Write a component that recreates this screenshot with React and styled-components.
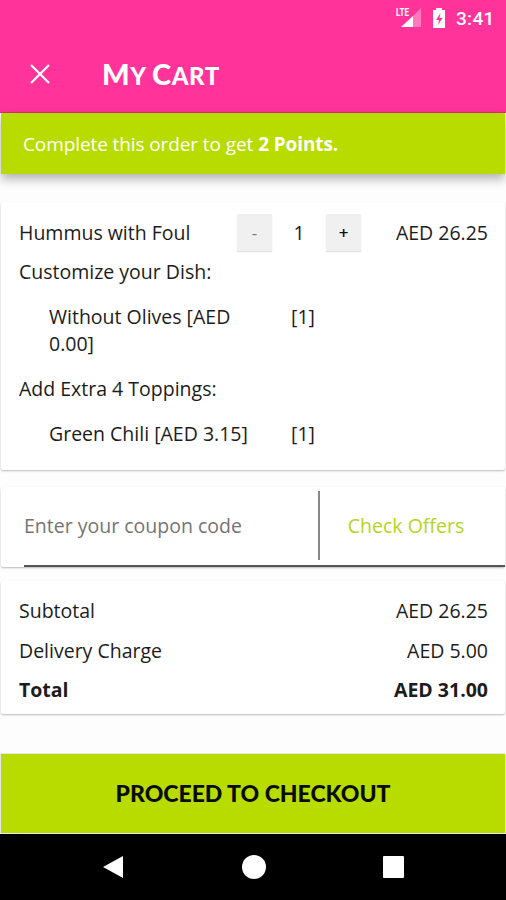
import styled, { createGlobalStyle } from "styled-components";

const GlobalStyle = createGlobalStyle`
  * {
    box-sizing: border-box;
  }
  body {
    margin: 0;
    background-color: #fdfdfd;
    color: #1c1c1c;
    font-family: "Open Sans", "Noto Sans", sans-serif;
    font-size: 19.5px;
    line-height: 27px;
  }
  button, input {
    font: inherit;
    color: inherit;
    border: none;
    background: none;
    padding: 0;
  }
`;
const StyledScreen = styled.div`
  display: flex;
  flex-direction: column;
  width: 506px;
  height: 900px;
  overflow: hidden;
`;
const StyledHeader = styled.header`
  height: 113px;
  background-color: #ff3399;
  border-bottom: 1px solid #d42f80;
  color: white;
`;
const StyledStatusBar = styled.div`
  display: flex;
  justify-content: flex-end;
  align-items: center;
  height: 36px;
  padding-right: 11px;
`;
const StyledClock = styled.span`
  width: 39px;
  margin-left: 9px;
  font-family: Roboto, sans-serif;
  font-size: 19px;
  font-weight: 500;
  letter-spacing: 0.3px;
  white-space: nowrap;
`;
const StyledToolbar = styled.div`
  display: flex;
  align-items: center;
  gap: 52px;
  height: 76px;
  padding-left: 30px;
`;
const StyledIconButton = styled.button`
  display: flex;
`;
const StyledTitle = styled.h1`
  margin: 0;
  font-family: Lato, sans-serif;
  font-size: 24px;
  font-weight: 900;
  letter-spacing: 0.6px;
  text-transform: uppercase;
`;
const StyledCapital = styled.span`
  font-size: 29px;
`;
const StyledBanner = styled.div`
  flex: none;
  display: flex;
  align-items: center;
  gap: 5px;
  height: 61px;
  margin: 0 1px;
  padding: 2px 22px 0;
  background-color: #b8dc00;
  box-shadow: 0 5px 10px rgba(0, 0, 0, 0.3);
  color: white;
  font-size: 19px;
  letter-spacing: -0.1px;
`;
const StyledCard = styled.section`
  flex: none;
  height: ${(props) => props.$height}px;
  margin: ${(props) => props.$top}px 1px 0;
  background-color: white;
  border-radius: 2px;
  box-shadow: 0 1px 2px rgba(0, 0, 0, 0.27);
`;
const StyledItemRow = styled.div`
  display: grid;
  grid-template-columns: 218px 124px 1fr;
  align-items: center;
  height: 37px;
  margin: 12px 17px 7px 18px;
`;
const StyledStepper = styled.div`
  display: flex;
  justify-content: space-between;
  align-items: center;
`;
const StyledStepButton = styled.button`
  width: 35px;
  height: 37px;
  background-color: #f0f0f0;
  box-shadow: 0 1px 1px #e2e2e2;
  font-size: 17px;
  font-weight: ${(props) => (props.$muted ? 400 : 600)};
  color: ${(props) => (props.$muted ? "#777" : "#111")};
`;
const StyledAmount = styled.span`
  text-align: right;
  letter-spacing: ${(props) => props.$spacing || 0}px;
`;
const StyledGroupTitle = styled.div`
  padding-left: 18px;
`;
const StyledOption = styled.div`
  display: grid;
  grid-template-columns: 215px auto;
  gap: 27px;
  padding: 18px 0 18px 48px;
`;
const StyledCouponCard = styled(StyledCard)`
  display: flex;
  padding-left: 23px;
`;
const StyledCouponForm = styled.div`
  display: flex;
  width: 100%;
  padding-top: 4px;
  border-bottom: 2px solid #555;
`;
const StyledCouponInput = styled.input`
  width: 296px;
  height: 69px;
  border-right: 2px solid #888;
  outline: none;
  &::placeholder {
    color: #747474;
    opacity: 1;
  }
`;
const StyledOffersButton = styled.button`
  flex: 1;
  height: 69px;
  padding-left: 5px;
  padding-right: 18px;
  color: #b4d51d;
`;
const StyledSummary = styled(StyledCard)`
  display: flex;
  flex-direction: column;
  gap: 12.5px;
  padding: 16px 17px 0 18px;
`;
const StyledSummaryRow = styled.div`
  display: flex;
  justify-content: space-between;
  font-weight: ${(props) => (props.$bold ? 700 : "inherit")};
`;
const StyledCheckoutButton = styled.button`
  flex: none;
  height: 79px;
  margin: 40px 1px 0;
  background-color: #b8dc00;
  box-shadow: 0 0 1px #777;
  color: #080d00;
  font-family: Lato, sans-serif;
  font-size: 23px;
  font-weight: 900;
  text-transform: uppercase;
`;
const StyledNavBar = styled.nav`
  flex: 1;
  display: flex;
  justify-content: space-between;
  align-items: center;
  margin-top: 1px;
  padding: 0 101px;
  background-color: black;
`;

const options = [
  { group: "Customize your Dish:", name: "Without Olives [AED 0.00]", qty: 1 },
  { group: "Add Extra 4 Toppings:", name: "Green Chili [AED 3.15]", qty: 1 },
];
const summary = [
  { label: "Subtotal", amount: "AED 26.25" },
  { label: "Delivery Charge", amount: "AED 5.00" },
  { label: "Total", amount: "AED 31.00", bold: true },
];

function StatusIcons() {
  return (
    <svg width="52" height="26" viewBox="0 0 52 26" fill="white">
      <path d="M26 3v19H7z" opacity="0.35" />
      <path d="M18 11v11H6z" />
      <rect width="15" height="12" fill="#ff3399" />
      <text
        x="1"
        y="11"
        fontFamily="Roboto"
        fontSize="10"
        fontWeight="700"
        textLength="13"
        lengthAdjust="spacingAndGlyphs"
      >
        LTE
      </text>
      <path d="M41 3h6v2h3v18H38V5h3z" />
      <path d="M45.5 8 41 15h3l-1 5 4.5-7h-3z" fill="#ff3399" />
    </svg>
  );
}

export default function App() {
  return (
    <>
      <GlobalStyle />
      <StyledScreen>
        <StyledHeader>
          <StyledStatusBar>
            <StatusIcons />
            <StyledClock>3:41</StyledClock>
          </StyledStatusBar>
          <StyledToolbar>
            <StyledIconButton aria-label="Close">
              <svg width="20" height="20" stroke="white" strokeWidth="2.2">
                <path d="M1 1l18 18M19 1L1 19" />
              </svg>
            </StyledIconButton>
            <StyledTitle>
              <StyledCapital>M</StyledCapital>y <StyledCapital>C</StyledCapital>
              art
            </StyledTitle>
          </StyledToolbar>
        </StyledHeader>
        <StyledBanner>
          <span>Complete this order to get</span>
          <strong>2 Points.</strong>
        </StyledBanner>

        <StyledCard $height={268} $top={28}>
          <StyledItemRow>
            <span>Hummus with Foul</span>
            <StyledStepper>
              <StyledStepButton $muted>-</StyledStepButton>
              <span>1</span>
              <StyledStepButton>+</StyledStepButton>
            </StyledStepper>
            <StyledAmount>AED 26.25</StyledAmount>
          </StyledItemRow>
          {options.map((option) => (
            <div key={option.group}>
              <StyledGroupTitle>{option.group}</StyledGroupTitle>
              <StyledOption>
                <span>{option.name}</span>
                <span>[{option.qty}]</span>
              </StyledOption>
            </div>
          ))}
        </StyledCard>

        <StyledCouponCard $height={80} $top={17}>
          <StyledCouponForm>
            <StyledCouponInput placeholder="Enter your coupon code" />
            <StyledOffersButton>Check Offers</StyledOffersButton>
          </StyledCouponForm>
        </StyledCouponCard>

        <StyledSummary $height={133} $top={14}>
          {summary.map((row) => (
            <StyledSummaryRow key={row.label} $bold={row.bold}>
              <span>{row.label}</span>
              <StyledAmount>{row.amount}</StyledAmount>
            </StyledSummaryRow>
          ))}
        </StyledSummary>

        <StyledCheckoutButton>Proceed to Checkout</StyledCheckoutButton>
        <StyledNavBar>
          <svg width="24" height="26" fill="white">
            <path d="M22 2v22L2 13z" />
          </svg>
          <svg width="26" height="26" fill="white">
            <circle cx="13" cy="13" r="12" />
          </svg>
          <svg width="23" height="26" fill="white">
            <rect x="1" y="2" width="21" height="22" rx="1" />
          </svg>
        </StyledNavBar>
      </StyledScreen>
    </>
  );
}
